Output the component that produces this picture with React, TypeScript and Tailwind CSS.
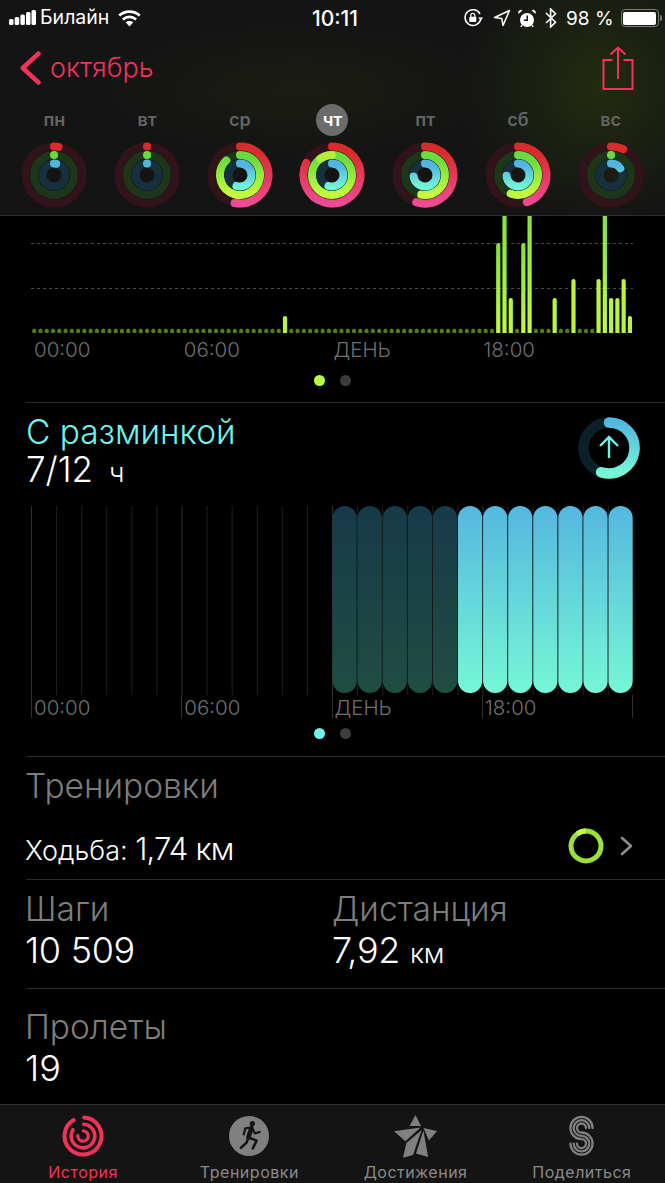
import React from 'react';

const arc = (r: number, from: number, to: number, cx = 0, cy = 0) => {
  const pt = (f: number) => {
    const a = f * Math.PI * 2 - Math.PI / 2;
    return `${(cx + r * Math.cos(a)).toFixed(2)} ${(cy + r * Math.sin(a)).toFixed(2)}`;
  };
  const large = to - from > 0.5 ? 1 : 0;
  return `M ${pt(from)} A ${r} ${r} 0 ${large} 1 ${pt(to)}`;
};

const RINGS = [
  { key: 'move', r: 28.5, track: '#33131a', top: '#d92b2b', bottom: '#f04a94' },
  { key: 'exercise', r: 20, track: '#1d3518', top: '#6adb3e', bottom: '#c6fc3e' },
  { key: 'stand', r: 11.5, track: '#16303d', top: '#52b5e0', bottom: '#72f5d6' },
];

const days = [
  { label: 'пн', v: [0.025, 0.001, 0.03] },
  { label: 'вт', v: [0.001, 0.001, 0.001] },
  { label: 'ср', v: [0.53, 0.88, 0.55] },
  { label: 'чт', v: [0.82, 1.02, 0.55], active: true },
  { label: 'пт', v: [0.55, 0.53, 0.73] },
  { label: 'сб', v: [0.45, 0.56, 0.74] },
  { label: 'вс', v: [0.07, 0.001, 0.15] },
];

const ActivityRing = ({ id, values }: { id: string; values: number[] }) => (
  <svg width="66" height="66" viewBox="-33 -33 66 66">
    <defs>
      {RINGS.map((ring) => (
        <linearGradient key={ring.key} id={`${id}-${ring.key}`} gradientUnits="userSpaceOnUse" x1="0" y1={-ring.r} x2="0" y2={ring.r}>
          <stop offset="0.1" stopColor={ring.top} />
          <stop offset="1" stopColor={ring.bottom} />
        </linearGradient>
      ))}
    </defs>
    {RINGS.map((ring, i) => {
      const v = values[i];
      return (
        <g key={ring.key} fill="none" strokeWidth="8" strokeLinecap="round">
          <circle r={ring.r} stroke={ring.track} />
          {v >= 1 ? (
            <>
              <circle r={ring.r} stroke={`url(#${id}-${ring.key})`} />
              <path d={arc(ring.r, 0.9, 0.999)} stroke="#b4ee3c" />
            </>
          ) : (
            <path d={arc(ring.r, 0, v)} stroke={`url(#${id}-${ring.key})`} />
          )}
        </g>
      );
    })}
  </svg>
);

const barHeights: Record<number, number> = {
  40: 17, 74: 90, 75: 130, 76: 35, 78: 90, 79: 130, 83: 35, 86: 54, 90: 54, 91: 130, 92: 35, 93: 35, 94: 54, 95: 17,
};
const PITCH = 602 / 96;

const MoveChart = () => (
  <svg width="602" height="117" viewBox="0 0 602 117" className="block">
    <defs>
      <linearGradient id="bar" x1="0" y1="0" x2="0" y2="1">
        <stop offset="0" stopColor="#7fe03c" />
        <stop offset="1" stopColor="#c2fa3e" />
      </linearGradient>
    </defs>
    <line x1="0" x2="602" y1="27.5" y2="27.5" stroke="#4a4a4a" strokeDasharray="3 3" />
    <line x1="0" x2="602" y1="72.5" y2="72.5" stroke="#4a4a4a" strokeDasharray="3 3" />
    {Array.from({ length: 96 }).map((_, i) => {
      const h = barHeights[i];
      const x = i * PITCH + 1.1;
      if (h) {
        const top = 117 - h;
        return <path key={i} d={`M ${x} 117 V ${top + 2} a 2.1 2.1 0 0 1 4.2 0 V 117 Z`} fill={h > 60 ? 'url(#bar)' : '#b9f53e'} />;
      }
      return <ellipse key={i} cx={x + 2.1} cy="115" rx="2.1" ry="2.6" fill="#547d18" />;
    })}
  </svg>
);

const StandChart = () => {
  const pitch = 602 / 24;
  return (
    <svg width="602" height="189" viewBox="0 0 602 189" className="block">
      <defs>
        <linearGradient id="standOn" x1="0" y1="0" x2="0" y2="1">
          <stop offset="0" stopColor="#55b7df" />
          <stop offset="1" stopColor="#76f7d6" />
        </linearGradient>
        <linearGradient id="standOff" x1="0" y1="0" x2="0" y2="1">
          <stop offset="0" stopColor="#173a4a" />
          <stop offset="1" stopColor="#1f4d41" />
        </linearGradient>
      </defs>
      {Array.from({ length: 25 }).map((_, i) => (
        <line key={i} x1={i * pitch + 0.5} x2={i * pitch + 0.5} y1="0" y2="189" stroke={i % 6 === 0 ? '#333333' : '#202020'} />
      ))}
      {Array.from({ length: 12 }).map((_, i) => (
        <rect key={i} x={(i + 12) * pitch + 0.6} y="0" width={pitch - 0.9} height="187" rx="12" fill={i < 5 ? 'url(#standOff)' : 'url(#standOn)'} />
      ))}
    </svg>
  );
};

const hours = ['00:00', '06:00', 'ДЕНЬ', '18:00'];

const PageDots = ({ color }: { color: string }) => (
  <div className="flex justify-center gap-[15px] pr-[26px]">
    <span className={`w-[11px] h-[11px] rounded-full ${color}`} />
    <span className="w-[11px] h-[11px] rounded-full bg-[#3c3c3c]" />
  </div>
);

const Signal = () => (
  <svg width="27" height="16" viewBox="0 0 27 16" fill="#fff">
    <rect x="0" y="9" width="4.5" height="6" rx="1.5" />
    <rect x="5.7" y="7" width="4.5" height="8" rx="1.5" />
    <rect x="11.4" y="4.5" width="4.5" height="10.5" rx="1.5" />
    <rect x="17" y="2" width="4.5" height="13" rx="1.5" />
    <rect x="22.5" y="0" width="4.5" height="15" rx="1.5" />
  </svg>
);

const Wifi = () => (
  <svg width="23" height="17" viewBox="0 0 23 17" fill="none" stroke="#fff" strokeWidth="2.7">
    <path d="M1.2 5.6 C7 0.4 16 0.4 21.8 5.6" />
    <path d="M4.9 9.4 C8.8 6 14.2 6 18.1 9.4" />
    <path d="M11.5 16.4 L7.7 12.3 C9.8 10.5 13.2 10.5 15.3 12.3 Z" fill="#fff" stroke="none" />
  </svg>
);

const LockRotation = () => (
  <svg width="20" height="20" viewBox="0 0 20 20" fill="none" stroke="#fff" strokeWidth="1.5">
    <path d="M17.6 11.6 A 7.9 7.9 0 1 1 17 6" />
    <path d="M15 9.6 L17.9 12.8 L20 9.6 Z" fill="#fff" stroke="none" />
    <rect x="6.3" y="8.8" width="7" height="5.2" rx="0.8" fill="#fff" stroke="none" />
    <path d="M7.8 9 V7.4 a2 2 0 0 1 4 0 V9" strokeWidth="1.2" />
  </svg>
);

const Location = () => (
  <svg width="18" height="18" viewBox="0 0 18 18" fill="none" stroke="#fff" strokeWidth="1.5" strokeLinejoin="round">
    <path d="M16.5 1.5 L1.5 8.5 L8.8 9.4 L10 16.5 Z" />
  </svg>
);

const Alarm = () => (
  <svg width="18" height="19" viewBox="0 0 18 19">
    <circle cx="9" cy="11" r="7" fill="#fff" />
    <path d="M9.2 6.5 V11.2 H5.8" fill="none" stroke="#141414" strokeWidth="1.5" />
    <path d="M0.6 4.8 L4.4 1.4 A 2.6 2.6 0 0 0 0.6 4.8 Z M17.4 4.8 L13.6 1.4 A 2.6 2.6 0 0 1 17.4 4.8 Z" fill="#fff" />
    <path d="M4 16 L2.8 18 M14 16 L15.2 18" stroke="#fff" strokeWidth="1.4" />
  </svg>
);

const Bluetooth = () => (
  <svg width="12" height="20" viewBox="0 0 12 20" fill="none" stroke="#fff" strokeWidth="1.6">
    <path d="M1 5 L10.5 14.3 L5.6 19 V1 L10.5 5.7 L1 15" />
  </svg>
);

const Battery = () => (
  <div className="flex items-center">
    <div className="w-[38px] h-[18px] rounded-[4px] border-[1.5px] border-[#7a7a7a] p-[1.5px]">
      <div className="w-full h-full rounded-[2px] bg-white" />
    </div>
    <div className="w-[2px] h-[6px] ml-[1px] rounded-r-sm bg-[#7a7a7a]" />
  </div>
);

const StatusBar = () => (
  <div className="h-[36px] flex items-center text-white">
    <div className="w-[232px] flex items-center pl-[9px]">
      <Signal />
      <span className="ml-[4px] text-[19.5px] font-normal leading-none">Билайн</span>
      <span className="ml-[9px]"><Wifi /></span>
    </div>
    <div className="w-[206px] text-center text-[21px] font-medium leading-none">10:11</div>
    <div className="flex-1 flex items-center pl-[25px]">
      <LockRotation />
      <span className="ml-[10px]"><Location /></span>
      <span className="ml-[7px]"><Alarm /></span>
      <span className="ml-[9px]"><Bluetooth /></span>
      <span className="ml-[9px] text-[19px] leading-none whitespace-nowrap">98 %</span>
      <span className="ml-[7px]"><Battery /></span>
    </div>
  </div>
);

const Header = () => (
  <header className="h-[216px] shrink-0 border-b border-[#2e2e2e] bg-[#141414] bg-[radial-gradient(circle_at_600px_85px,#222c0f_0%,#1a2012_70px,transparent_140px),radial-gradient(ellipse_at_300px_90px,#1a1d13_0%,transparent_200px)]">
    <StatusBar />
    <div className="h-[64px] flex items-center justify-between pl-[20px] pr-[31px] text-[#f2325a]">
      <div className="flex items-center">
        <svg width="21" height="34" viewBox="0 0 21 34" fill="none" stroke="#f2325a" strokeWidth="4.6" strokeLinecap="round" strokeLinejoin="round">
          <path d="M18.4 2.6 L2.8 17 L18.4 31.4" />
        </svg>
        <span className="ml-[9px] text-[27px] leading-none font-light -mt-[1px]">октябрь</span>
      </div>
      <svg width="32" height="44" viewBox="0 0 32 44" fill="none" stroke="#f2325a" strokeWidth="2">
        <path d="M10.5 14 H1.5 V43 H30.5 V14 H21.5" />
        <path d="M16 33 V1.5 M8.5 8.5 L16 1.5 L23.5 8.5" />
      </svg>
    </div>
    <div className="grid grid-cols-7 px-[8px] h-[36px] pt-[4px]">
      {days.map((d) => (
        <div key={d.label} className="flex justify-center">
          <span className={`w-[32px] h-[32px] rounded-full flex items-center justify-center text-[18px] leading-none font-semibold ${d.active ? 'bg-[#6b6b6b] text-white' : 'text-[#646464]'}`}>
            {d.label}
          </span>
        </div>
      ))}
    </div>
    <div className="grid grid-cols-7 px-[8px] pt-[6px]">
      {days.map((d, i) => (
        <div key={d.label} className="flex justify-center">
          <ActivityRing id={`day${i}`} values={d.v} />
        </div>
      ))}
    </div>
  </header>
);

const HistoryIcon = () => (
  <svg width="42" height="42" viewBox="-21 -21 42 42" fill="none" stroke="#f2325a" strokeLinecap="round">
    <path d={arc(18.5, 0.01, 0.915)} strokeWidth="4" />
    <path d={arc(11.8, 0.01, 0.84)} strokeWidth="3.6" />
    <path d={arc(5.2, 0.01, 0.76)} strokeWidth="3.2" />
  </svg>
);

const RunIcon = () => (
  <svg width="42" height="42" viewBox="-21 -21 42 42">
    <circle r="20" fill="#808080" />
    <circle cx="3.4" cy="-12.4" r="2.6" fill="#141414" />
    <g fill="none" stroke="#141414" strokeLinejoin="round" strokeLinecap="round">
      <path d="M2.4 -8 L-0.6 1.5" strokeWidth="4.6" />
      <path d="M1.8 -8.5 L-3.8 -7.6 L-5.2 -1.6" strokeWidth="2.2" />
      <path d="M3 -8 L6 -2.6 L10.6 -4" strokeWidth="2.2" />
      <path d="M-0.6 1.5 L7.6 4.6 L3.8 12.4" strokeWidth="2.6" />
      <path d="M-0.8 2 L-2.4 6.6 L-8 11.8" strokeWidth="2.6" />
    </g>
  </svg>
);

const StarIcon = () => (
  <svg width="46" height="44" viewBox="0 0 46 44" fill="#808080">
    <path d="M22.5 1 L28 12 H16.5 Z" />
    <path d="M30.5 14 L44 17 L36 26.5 Z" />
    <path d="M1 17.2 L27.5 13.6 L12.4 27.2 Z" />
    <path d="M28.6 16 L13.4 29 L10 43.8 L20 41 Z" />
    <path d="M30.4 16.6 L35.2 43 L23 39.4 Z" />
  </svg>
);

const SIcon = () => {
  const s = (a: number, b: number) => {
    const top = 13;
    const bottom = top + 7.8 * 2;
    return `M ${12.5 + a} ${top} A ${a} ${a} 0 1 0 12.5 ${top + a} A ${b} ${b} 0 1 1 ${12.5 - b} ${bottom}`;
  };
  return (
    <svg width="25" height="42" viewBox="0 0 25 42" fill="none" stroke="#808080" strokeWidth="2.3" strokeLinecap="round">
      <path d={s(7.8, 7.8)} />
      <path d={s(11.1, 4.5)} />
      <path d={s(4.5, 11.1)} />
    </svg>
  );
};

const tabs = [
  { label: 'История', icon: <HistoryIcon />, active: true },
  { label: 'Тренировки', icon: <RunIcon /> },
  { label: 'Достижения', icon: <StarIcon /> },
  { label: 'Поделиться', icon: <SIcon /> },
];

const TabBar = () => (
  <nav className="h-[79px] shrink-0 grid grid-cols-4 border-t border-[#333333] bg-[#141414]">
    {tabs.map((t) => (
      <div key={t.label} className="flex flex-col items-center">
        <div className="h-[44px] mt-[9px] flex items-center justify-center">{t.icon}</div>
        <span className={`mt-[4px] text-[16px] leading-[20px] tracking-[0.5px] whitespace-nowrap ${t.active ? 'text-[#f2325a]' : 'text-[#8a8a8a]'}`}>
          {t.label}
        </span>
      </div>
    ))}
  </nav>
);

export default function App() {
  return (
    <div className="w-[665px] h-[1183px] flex flex-col overflow-hidden bg-black text-white font-['Inter','Liberation_Sans',sans-serif]">
      <Header />
      <main className="flex-1 overflow-hidden">
        {/* график движения, верх обрезан шапкой */}
        <section className="ml-[26px] h-[187px] border-b border-[#2a2a2a]">
          <div className="ml-[5px] w-[602px]">
            <MoveChart />
            <div className="grid grid-cols-4 pl-[3px] h-[34px] pt-[5px] text-[20.5px] leading-[24px] font-light text-[#6f6f6f]">
              {hours.map((h) => <span key={h}>{h}</span>)}
            </div>
          </div>
          <div className="pt-[8px]"><PageDots color="bg-[#b6fb3e]" /></div>
        </section>

        {/* С разминкой */}
        <section className="ml-[26px] h-[354px] border-b border-[#2a2a2a]">
          <div className="flex justify-between pr-[25px] h-[103px] pt-[11px]">
            <div>
              <div className="text-[33.5px] leading-[36px] text-[#6ff3ee] font-light">С разминкой</div>
              <div className="text-[35px] leading-[36px] text-white font-light mt-[1px]">
                7/12 <span className="ml-[6px] text-[27px]">ч</span>
              </div>
            </div>
            <svg width="62" height="62" viewBox="-31 -31 62 62" fill="none" className="mt-[3px]">
              <defs>
                <linearGradient id="standIcon" gradientUnits="userSpaceOnUse" x1="0" y1="-26" x2="0" y2="26">
                  <stop offset="0" stopColor="#54b6e0" />
                  <stop offset="1" stopColor="#76f7d6" />
                </linearGradient>
              </defs>
              <circle r="25.5" stroke="#0a2028" strokeWidth="10.5" />
              <path d={arc(25.5, 0, 0.55)} stroke="url(#standIcon)" strokeWidth="10.5" strokeLinecap="round" />
              <path d="M0 10 V-11 M-9 -2 L0 -11 L9 -2" stroke="#6ff3e6" strokeWidth="2.4" />
            </svg>
          </div>
          <div className="ml-[5px] w-[602px]">
            <StandChart />
            <div className="grid grid-cols-4 h-[23px] border-r border-[#333333] text-[20.5px] leading-[21px] font-light text-[#6f6f6f]">
              {hours.map((h) => <span key={h} className="border-l border-[#333333] pl-[2px] pt-[2px]">{h}</span>)}
            </div>
          </div>
          <div className="pt-[10px]"><PageDots color="bg-[#6ff3ee]" /></div>
        </section>

        {/* Тренировки */}
        <section className="ml-[26px] h-[123px] border-b border-[#2a2a2a]">
          <div className="pt-[9px] -ml-[1px] text-[33.5px] leading-[40px] font-light text-[#7d7d7d]">Тренировки</div>
          <div className="mt-[22px] flex items-center justify-between pr-[32px] h-[36px]">
            <div className="-ml-[1px] mt-[5px] text-[27px] leading-none whitespace-nowrap font-light">
              Ходьба: <span className="text-[31px] tracking-[-0.8px]">1,74 км</span>
            </div>
            <div className="flex items-center gap-[16px] -mt-[1px]">
              <svg width="36" height="36" viewBox="-18 -18 36 36" fill="none">
                <circle r="15" stroke="#9be03c" strokeWidth="5" />
                <path d={arc(15, 0.9, 1)} stroke="#c6fc3e" strokeWidth="5" />
              </svg>
              <svg width="13" height="20" viewBox="0 0 13 20" fill="none" stroke="#8c8c8c" strokeWidth="2.6" strokeLinecap="round" strokeLinejoin="round">
                <path d="M2 2 L11 10 L2 18" />
              </svg>
            </div>
          </div>
        </section>

        {/* Шаги и дистанция */}
        <section className="ml-[26px] h-[109px] border-b border-[#2a2a2a] grid grid-cols-[307px_1fr] pt-[9px]">
          <div className="-ml-[1px]">
            <div className="text-[33.5px] leading-[40px] font-light text-[#7d7d7d]">Шаги</div>
            <div className="text-[36px] leading-[42px] font-light tracking-[-0.3px]">10 509</div>
          </div>
          <div className="-ml-[1px]">
            <div className="text-[33.5px] leading-[40px] font-light text-[#7d7d7d]">Дистанция</div>
            <div className="text-[36px] leading-[42px] font-light tracking-[-0.3px]">7,92 <span className="text-[27px]">км</span></div>
          </div>
        </section>

        {/* Пролеты */}
        <section className="ml-[26px] pt-[18px]">
          <div className="-ml-[1px] text-[33.5px] leading-[40px] font-light text-[#7d7d7d]">Пролеты</div>
          <div className="-ml-[1px] text-[36px] leading-[42px] font-light">19</div>
        </section>
      </main>
      <TabBar />
    </div>
  );
}
